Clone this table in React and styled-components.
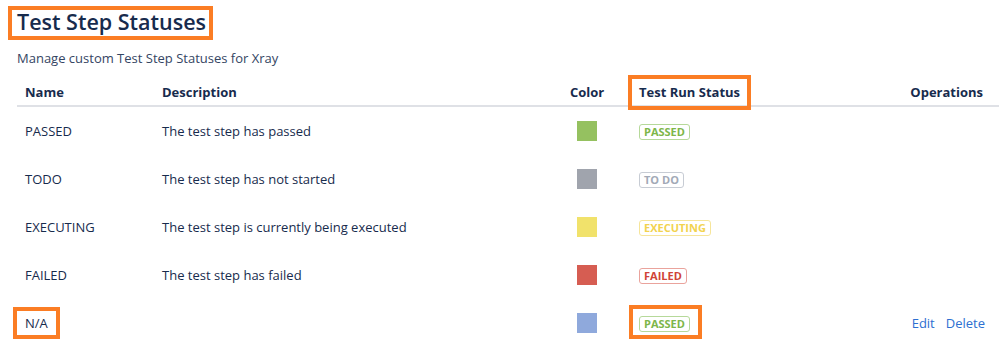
import React from "react";
import styled, { createGlobalStyle } from "styled-components";

const GlobalStyle = createGlobalStyle`
  body {
    margin: 0;
    background: #ffffff;
    font-family: "Open Sans", "Noto Sans", sans-serif;
    color: #172b4d;
  }
`;

const Page = styled.div`
  width: 999px;
  height: 344px;
  overflow: hidden;
  padding: 8px 0 0 17px;
  box-sizing: border-box;
`;

const Highlight = styled.span`
  position: relative;
  display: inline-block;
  &::after {
    content: "";
    position: absolute;
    top: ${(p) => p.$t}px;
    right: ${(p) => p.$r}px;
    bottom: ${(p) => p.$b}px;
    left: ${(p) => p.$l}px;
    border: 4px solid #fb7d24;
    pointer-events: none;
  }
`;

const Title = styled.h1`
  margin: 0;
  font-size: 21.5px;
  font-weight: 600;
  line-height: 28px;
  color: #172b4d;
`;

const Subtitle = styled.p`
  margin: 12px 0 0;
  font-size: 13px;
  line-height: 20px;
  color: #344563;
`;

const Table = styled.table`
  margin-top: 11px;
  width: 982px;
  border-collapse: collapse;
  table-layout: fixed;
`;

const HeadCell = styled.th`
  text-align: ${(p) => (p.$right ? "right" : "left")};
  font-size: 13px;
  font-weight: 700;
  height: 26px;
  padding: 0 ${(p) => (p.$right ? "16px" : "8px")} 0 8px;
  border-bottom: 2px solid #dfe1e6;
  vertical-align: middle;
  color: #172b4d;
`;

const Cell = styled.td`
  height: 48px;
  padding: 0 ${(p) => (p.$right ? "14px" : "8px")} 0 8px;
  font-size: 13px;
  text-align: ${(p) => (p.$right ? "right" : "left")};
  vertical-align: middle;
  color: #172b4d;
`;

const Swatch = styled.span`
  display: inline-block;
  width: 20px;
  height: 20px;
  margin-left: 7px;
  background: ${(p) => p.$color};
  vertical-align: middle;
`;

const Lozenge = styled.span`
  display: inline-block;
  box-sizing: border-box;
  height: 16px;
  line-height: 14px;
  padding: 0 4px;
  border: 1px solid ${(p) => p.$border};
  border-radius: 3px;
  color: ${(p) => p.$color};
  font-size: 11px;
  font-weight: 700;
  text-transform: uppercase;
  vertical-align: middle;
`;

const Link = styled.a`
  color: #2d6fd1;
  text-decoration: none;
  margin-left: ${(p) => p.$gap || 0}px;
  cursor: pointer;
`;

const lozenges = {
  passed: { label: "Passed", color: "#7db64a", border: "#b6d99a" },
  todo: { label: "To Do", color: "#a2a9b6", border: "#c7ccd4" },
  executing: { label: "Executing", color: "#f2d34f", border: "#f6e59a" },
  failed: { label: "Failed", color: "#d04437", border: "#eaa39c" },
};

const rows = [
  { name: "PASSED", desc: "The test step has passed", color: "#95c160", status: "passed" },
  { name: "TODO", desc: "The test step has not started", color: "#a0a4ad", status: "todo" },
  { name: "EXECUTING", desc: "The test step is currently being executed", color: "#f1e26b", status: "executing" },
  { name: "FAILED", desc: "The test step has failed", color: "#d65d52", status: "failed" },
  { name: "N/A", desc: "", color: "#8fa9dc", status: "passed", custom: true },
];

const StatusLozenge = ({ status }) => {
  const l = lozenges[status];
  return (
    <Lozenge $color={l.color} $border={l.border}>
      {l.label}
    </Lozenge>
  );
};

export default function App() {
  return (
    <Page>
      <GlobalStyle />
      <Highlight $t={-2} $r={-7} $b={-4} $l={-9}>
        <Title>Test Step Statuses</Title>
      </Highlight>
      <Subtitle>Manage custom Test Step Statuses for Xray</Subtitle>
      <Table>
        <colgroup>
          <col style={{ width: 137 }} />
          <col style={{ width: 408 }} />
          <col style={{ width: 69 }} />
          <col style={{ width: 200 }} />
          <col />
        </colgroup>
        <thead>
          <tr>
            <HeadCell>Name</HeadCell>
            <HeadCell>Description</HeadCell>
            <HeadCell>Color</HeadCell>
            <HeadCell>
              <Highlight $t={-8} $r={-11} $b={-9} $l={-11}>
                Test Run Status
              </Highlight>
            </HeadCell>
            <HeadCell $right>Operations</HeadCell>
          </tr>
        </thead>
        <tbody>
          {rows.map((r) => (
            <tr key={r.name}>
              <Cell>
                {r.custom ? (
                  <Highlight $t={-7} $r={-12} $b={-7} $l={-12}>
                    {r.name}
                  </Highlight>
                ) : (
                  r.name
                )}
              </Cell>
              <Cell>{r.desc}</Cell>
              <Cell>
                <Swatch $color={r.color} />
              </Cell>
              <Cell>
                {r.custom ? (
                  <Highlight $t={-9} $r={-12} $b={-7} $l={-10}>
                    <StatusLozenge status={r.status} />
                  </Highlight>
                ) : (
                  <StatusLozenge status={r.status} />
                )}
              </Cell>
              <Cell $right>
                {r.custom && (
                  <>
                    <Link>Edit</Link>
                    <Link $gap={11}>Delete</Link>
                  </>
                )}
              </Cell>
            </tr>
          ))}
        </tbody>
      </Table>
    </Page>
  );
}
